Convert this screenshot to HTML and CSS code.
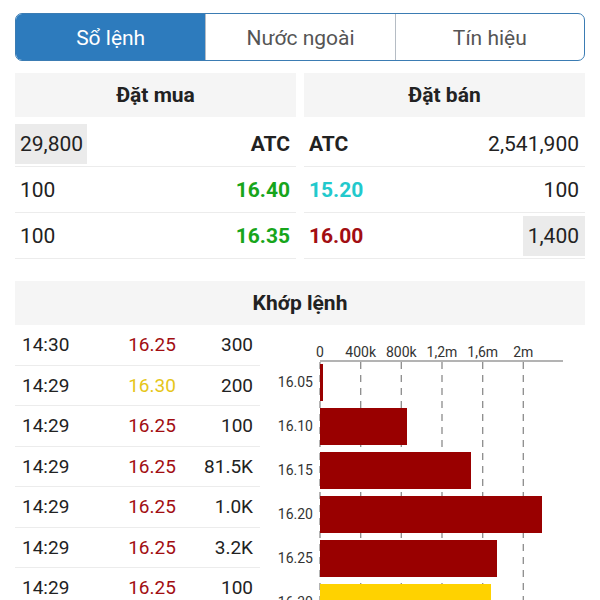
FILE: index.html
```html
<!DOCTYPE html>
<html lang="vi">
<head>
  <meta charset="UTF-8" />
  <meta name="viewport" content="width=device-width, initial-scale=1.0" />
  <title>Sổ lệnh</title>
  <link rel="stylesheet" href="styles.css">
</head>
<body>
  <div class="tabs">
    <div class="tab active">Sổ lệnh</div>
    <div class="tab">Nước ngoài</div>
    <div class="tab">Tín hiệu</div>
  </div>

  <div class="book">
    <div class="side">
      <div class="head">Đặt mua</div>
      <div class="row"><span class="hl">29,800</span><span class="bold">ATC</span></div>
      <div class="row"><span>100</span><span class="bold green">16.40</span></div>
      <div class="row"><span>100</span><span class="bold green">16.35</span></div>
    </div>
    <div class="side">
      <div class="head">Đặt bán</div>
      <div class="row"><span class="bold">ATC</span><span>2,541,900</span></div>
      <div class="row"><span class="bold cyan">15.20</span><span>100</span></div>
      <div class="row"><span class="bold red">16.00</span><span class="hl">1,400</span></div>
    </div>
  </div>

  <div class="head match-head">Khớp lệnh</div>

  <div class="match">
    <div class="trades">
      <div class="trade"><span>14:30</span><span class="price red">16.25</span><span class="vol">300</span></div>
      <div class="trade"><span>14:29</span><span class="price yellow">16.30</span><span class="vol">200</span></div>
      <div class="trade"><span>14:29</span><span class="price red">16.25</span><span class="vol">100</span></div>
      <div class="trade"><span>14:29</span><span class="price red">16.25</span><span class="vol">81.5K</span></div>
      <div class="trade"><span>14:29</span><span class="price red">16.25</span><span class="vol">1.0K</span></div>
      <div class="trade"><span>14:29</span><span class="price red">16.25</span><span class="vol">3.2K</span></div>
      <div class="trade"><span>14:29</span><span class="price red">16.25</span><span class="vol">100</span></div>
    </div>

    <svg class="chart" width="325" height="276" viewBox="0 0 325 276">
      <!-- volume by price, 400k = 40.67px -->
      <g class="axis-labels">
        <text x="60" y="32">0</text>
        <text x="100.7" y="32">400k</text>
        <text x="141.3" y="32">800k</text>
        <text x="182" y="32">1,2m</text>
        <text x="222.7" y="32">1,6m</text>
        <text x="263.3" y="32">2m</text>
      </g>
      <line class="axis" x1="60" y1="36" x2="303" y2="36" />
      <g class="grid">
        <line x1="60" y1="37" x2="60" y2="276" />
        <line x1="100.7" y1="37" x2="100.7" y2="276" />
        <line x1="141.3" y1="37" x2="141.3" y2="276" />
        <line x1="182" y1="37" x2="182" y2="276" />
        <line x1="222.7" y1="37" x2="222.7" y2="276" />
        <line x1="263.3" y1="37" x2="263.3" y2="276" />
      </g>
      <g class="bars">
        <rect x="60" y="39" width="3" height="37" />
        <rect x="60" y="83" width="87" height="37" />
        <rect x="60" y="127" width="151" height="37" />
        <rect x="60" y="171" width="222" height="37" />
        <rect x="60" y="215" width="177" height="37" />
        <rect class="cur" x="60" y="259" width="171" height="37" />
      </g>
      <g class="cat-labels">
        <text x="53" y="62">16.05</text>
        <text x="53" y="106">16.10</text>
        <text x="53" y="150">16.15</text>
        <text x="53" y="194">16.20</text>
        <text x="53" y="238">16.25</text>
        <text x="53" y="282">16.30</text>
      </g>
    </svg>
  </div>
</body>
</html>
```

FILE: styles.css
```css
body {
  font-family: Roboto, 'Liberation Sans', sans-serif;
  margin: 0;
  padding: 13px 15px 0;
  background: #fff;
  color: #222;
  overflow: hidden;
  height: 587px;
}
.tabs {
  display: grid;
  grid-template-columns: 1fr 1fr 1fr;
  border: 1.5px solid #3b7cb3;
  border-radius: 7px;
  overflow: hidden;
}
.tab {
  height: 46px;
  line-height: 48px;
  text-align: center;
  font-size: 21px;
  color: #555;
  border-left: 1px solid #b5bcc4;
}
.tab:first-child {
  border-left: none;
}
.tab.active {
  background: #2d7bbd;
  color: #fff;
}
.book {
  display: grid;
  grid-template-columns: 1fr 1fr;
  column-gap: 8px;
  margin-top: 12px;
}
.head {
  height: 44px;
  display: flex;
  align-items: center;
  justify-content: center;
  background: #f5f5f5;
  font-size: 21px;
  font-weight: bold;
  margin-bottom: 4px;
}
.row {
  height: 45px;
  display: flex;
  align-items: center;
  justify-content: space-between;
  border-bottom: 1px solid #ececec;
  font-size: 21px;
  padding-right: 6px;
}
.row span:first-child {
  padding-left: 5px;
}
.hl {
  background: #ebebeb;
  padding: 8px 4px 8px 5px;
}
.row span.hl:last-child {
  margin-right: -6px;
  padding-right: 6px;
}
.bold {
  font-weight: bold;
}
.green {
  color: #17a51b;
}
.cyan {
  color: #22c9cc;
}
.red {
  color: #a20e12;
}
.yellow {
  color: #e6c619;
}
.match-head {
  margin-top: 22px;
  margin-bottom: 0;
}
.match {
  display: flex;
}
.trades {
  width: 245px;
  flex: none;
}
.trade {
  display: grid;
  grid-template-columns: 100px 60px 1fr;
  align-items: center;
  height: 39.5px;
  padding: 0 7px;
  border-bottom: 1px solid #ececec;
  font-size: 19px;
}
.price {
  text-align: center;
}
.vol {
  text-align: right;
}
.chart {
  display: block;
  flex: none;
}
.chart text {
  font-family: Roboto, 'Liberation Sans', sans-serif;
  font-size: 14px;
  fill: #333;
}
.axis-labels text {
  text-anchor: middle;
}
.cat-labels text {
  text-anchor: end;
}
.axis {
  stroke: #9a9a9a;
  stroke-width: 1.5;
}
.grid line {
  stroke: #8c8c8c;
  stroke-width: 1.3;
  stroke-dasharray: 7 6;
}
.bars rect {
  fill: #990000;
}
.bars rect.cur {
  fill: #ffd200;
}
```
